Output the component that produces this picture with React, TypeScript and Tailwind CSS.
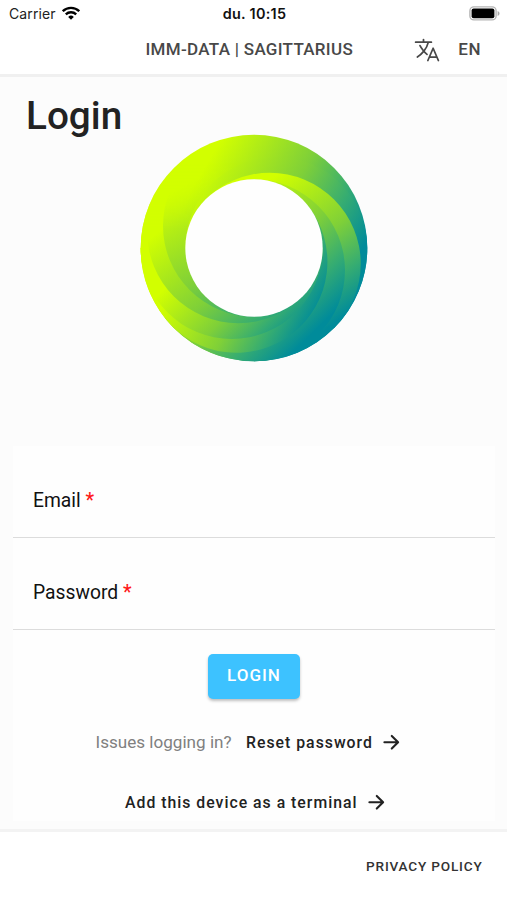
import { useState } from "react";
import { IoArrowForward, IoLanguageOutline } from "react-icons/io5";

type Blade = {
  id: string;
  angle: number; // where the blade reaches the outer circle
  sweep: number; // how far it follows the outer circle after that
  dir: [number, number];
  from: number;
  to: number;
};

const OUTER = 113.3;
const INNER = 68.7;
const DISC = (OUTER + INNER) / 2;

const blades: Record<string, Blade> = {
  c: { id: "c", angle: 180, sweep: 45, dir: [0.7, 0.7], from: -35, to: 92 },
  b: { id: "b", angle: 225, sweep: 45, dir: [0.6, 0.8], from: -70, to: 98 },
  g: { id: "g", angle: 270, sweep: 0, dir: [0.5, 0.87], from: -90, to: 92 },
  e: { id: "e", angle: 0, sweep: 45, dir: [0.87, 0.5], from: -85, to: 94 },
  a: { id: "a", angle: 45, sweep: 45, dir: [0.6, 0.8], from: -45, to: 108 },
  f: { id: "f", angle: 90, sweep: 52, dir: [0.7, 0.71], from: -55, to: 102 },
  d: { id: "d", angle: 142, sweep: 38, dir: [0.87, 0.5], from: -50, to: 86 },
};

function polar(radius: number, degrees: number) {
  const rad = (degrees * Math.PI) / 180;
  return `${(radius * Math.cos(rad)).toFixed(2)} ${(radius * Math.sin(rad)).toFixed(2)}`;
}

function bladePath({ angle, sweep }: Blade) {
  return [
    `M${polar(INNER, angle + 180)}`,
    `A${DISC} ${DISC} 0 0 1 ${polar(OUTER, angle)}`,
    sweep ? `A${OUTER} ${OUTER} 0 0 1 ${polar(OUTER, angle + sweep)}` : "",
    "L0 0Z",
  ].join("");
}

function Stops() {
  return (
    <>
      <stop offset="0" stopColor="#d2ff00" />
      <stop offset="0.5" stopColor="#7fd038" />
      <stop offset="0.78" stopColor="#35ac72" />
      <stop offset="1" stopColor="#008b9a" />
    </>
  );
}

function Shape({ blade }: { blade: Blade }) {
  return <path d={bladePath(blade)} fill={`url(#fill-${blade.id})`} />;
}

function Logo() {
  return (
    <svg width="228" height="228" viewBox="-114 -114 228 228">
      <defs>
        <linearGradient
          id="fill-base"
          gradientUnits="userSpaceOnUse"
          x1={-72}
          y1={-41}
          x2={78}
          y2={45}
        >
          <Stops />
        </linearGradient>
        {Object.values(blades).map(({ id, dir, from, to }) => (
          <linearGradient
            key={id}
            id={`fill-${id}`}
            gradientUnits="userSpaceOnUse"
            x1={dir[0] * from}
            y1={dir[1] * from}
            x2={dir[0] * to}
            y2={dir[1] * to}
          >
            <Stops />
          </linearGradient>
        ))}
        <linearGradient id="fade" gradientUnits="userSpaceOnUse" x1="0" y1="-20" x2="0" y2="-85">
          <stop offset="0" stopColor="#fff" />
          <stop offset="1" stopColor="#000" />
        </linearGradient>
        <mask id="fade-top" maskUnits="userSpaceOnUse" x="-120" y="-120" width="240" height="240">
          <rect x="-120" y="-120" width="240" height="240" fill="url(#fade)" />
        </mask>
        <clipPath id="lower">
          <rect x="-120" y="0" width="240" height="120" />
        </clipPath>
      </defs>
      <circle r={OUTER} fill="url(#fill-base)" />
      <g mask="url(#fade-top)">
        <Shape blade={blades.c} />
        <Shape blade={blades.b} />
        <Shape blade={blades.g} />
      </g>
      <Shape blade={blades.e} />
      <Shape blade={blades.a} />
      <Shape blade={blades.f} />
      <Shape blade={blades.d} />
      {/* the first blades also overlap the last ones in the lower half */}
      <g clipPath="url(#lower)">
        <Shape blade={blades.c} />
        <Shape blade={blades.b} />
        <Shape blade={blades.g} />
      </g>
      <circle r={INNER} fill="#fefefe" />
    </svg>
  );
}

function StatusBar() {
  return (
    <div className="grid h-[28px] grid-cols-3 items-center pr-[7px] pl-[9px] font-['Inter',sans-serif] text-[14px] text-[#222]">
      <div className="flex items-center gap-[6px]">
        <span className="-mt-px tracking-[0.1px]">Carrier</span>
        <svg className="-mt-[3px]" width="18" height="14" viewBox="0 0 18 14" fill="none" stroke="#000" strokeWidth="2.3">
          <path d="M0.8 5.2a11.7 11.7 0 0 1 16.4 0" />
          <path d="M3.8 8.4a7.4 7.4 0 0 1 10.4 0" />
          <path d="M9 13.8l-2.8-2.9a4 4 0 0 1 5.6 0z" fill="#000" stroke="none" />
        </svg>
      </div>
      <span className="text-center text-[14.4px] font-semibold tracking-[0.3px] whitespace-nowrap text-[#111]">
        du. 10:15
      </span>
      <svg className="-mt-[2px] justify-self-end" width="31" height="15" viewBox="0 0 31 15">
        <rect x="0.9" y="0.9" width="26.2" height="13" rx="4" fill="#fff" stroke="#b5b5b5" strokeWidth="1.4" />
        <rect x="2.6" y="2.6" width="22.8" height="9.6" rx="2" fill="#000" />
        <path d="M28.6 5v5c1.2-.5 1.9-1.4 1.9-2.5s-.7-2-1.9-2.5z" fill="#aaa" />
      </svg>
    </div>
  );
}

function Field({
  label,
  type,
  value,
  onChange,
}: {
  label: string;
  type: string;
  value: string;
  onChange: (value: string) => void;
}) {
  return (
    <label className="flex h-[92px] items-center border-b border-[#dcdcdc] px-5 pt-[20px] text-[19.3px] text-[#111]">
      <span className="whitespace-nowrap">
        {label} <span className="font-medium text-[#ff1a1a]">*</span>
      </span>
      <input
        type={type}
        value={value}
        onChange={(e) => onChange(e.target.value)}
        className="ml-3 min-w-0 flex-1 bg-transparent outline-none"
      />
    </label>
  );
}

export default function App() {
  const [email, setEmail] = useState("");
  const [password, setPassword] = useState("");

  return (
    <div className="flex h-[900px] w-[507px] flex-col overflow-hidden bg-[#fcfcfc] font-['Roboto',sans-serif]">
      <header className="h-[77px] border-b-[3px] border-[#f0f0f0] bg-white">
        <StatusBar />
        <div className="flex h-[43px] items-center pr-[26px] pl-[145.5px] font-medium text-[#484848]">
          <h2 className="text-[17px] tracking-[0.3px] whitespace-nowrap">IMM-DATA | SAGITTARIUS</h2>
          <IoLanguageOutline className="ml-auto" size={28} />
          <span className="ml-[17px] text-[17px] tracking-[0.5px]">EN</span>
        </div>
      </header>

      <main className="flex h-[752px] flex-col">
        <h1 className="h-[57px] pt-[14px] pl-[26px] text-[38.7px] leading-[49px] font-medium text-[#222]">
          Login
        </h1>
        <div className="flex h-[312px] justify-center">
          <Logo />
        </div>

        <form
          className="mr-[12px] ml-[13px] flex h-[375px] flex-col bg-[#fefefe]"
          onSubmit={(e) => e.preventDefault()}
        >
          <Field label="Email" type="email" value={email} onChange={setEmail} />
          <Field label="Password" type="password" value={password} onChange={setPassword} />

          <button
            type="submit"
            className="mt-[24px] h-[45px] w-[92px] self-center rounded-[5px] bg-[#3dc2ff] pb-[2px] text-[17px] font-medium tracking-[1px] text-white shadow-[0_2px_3px_rgba(0,0,0,0.25)]"
          >
            LOGIN
          </button>

          <div className="mt-[32px] ml-[82.5px] flex h-6 items-center whitespace-nowrap">
            <span className="text-[17.1px] text-[#808080]">Issues logging in?</span>
            <a className="ml-[14.5px] flex items-center text-[15.8px] font-medium tracking-[1px] text-[#222]">
              Reset password
              <IoArrowForward className="mb-px ml-[7px]" size={22.5} />
            </a>
          </div>

          <a className="mt-9 ml-[112px] flex h-6 items-center text-[15.8px] font-medium tracking-[1px] whitespace-nowrap text-[#222]">
            Add this device as a terminal
            <IoArrowForward className="mb-px ml-[7px]" size={22.5} />
          </a>
        </form>
      </main>

      <footer className="flex h-[71px] items-center justify-end border-t-[3px] border-[#f3f3f3] bg-white pt-px pr-[24.5px]">
        <a className="text-[13.6px] font-medium tracking-[0.8px] text-[#333]">PRIVACY POLICY</a>
      </footer>
    </div>
  );
}
